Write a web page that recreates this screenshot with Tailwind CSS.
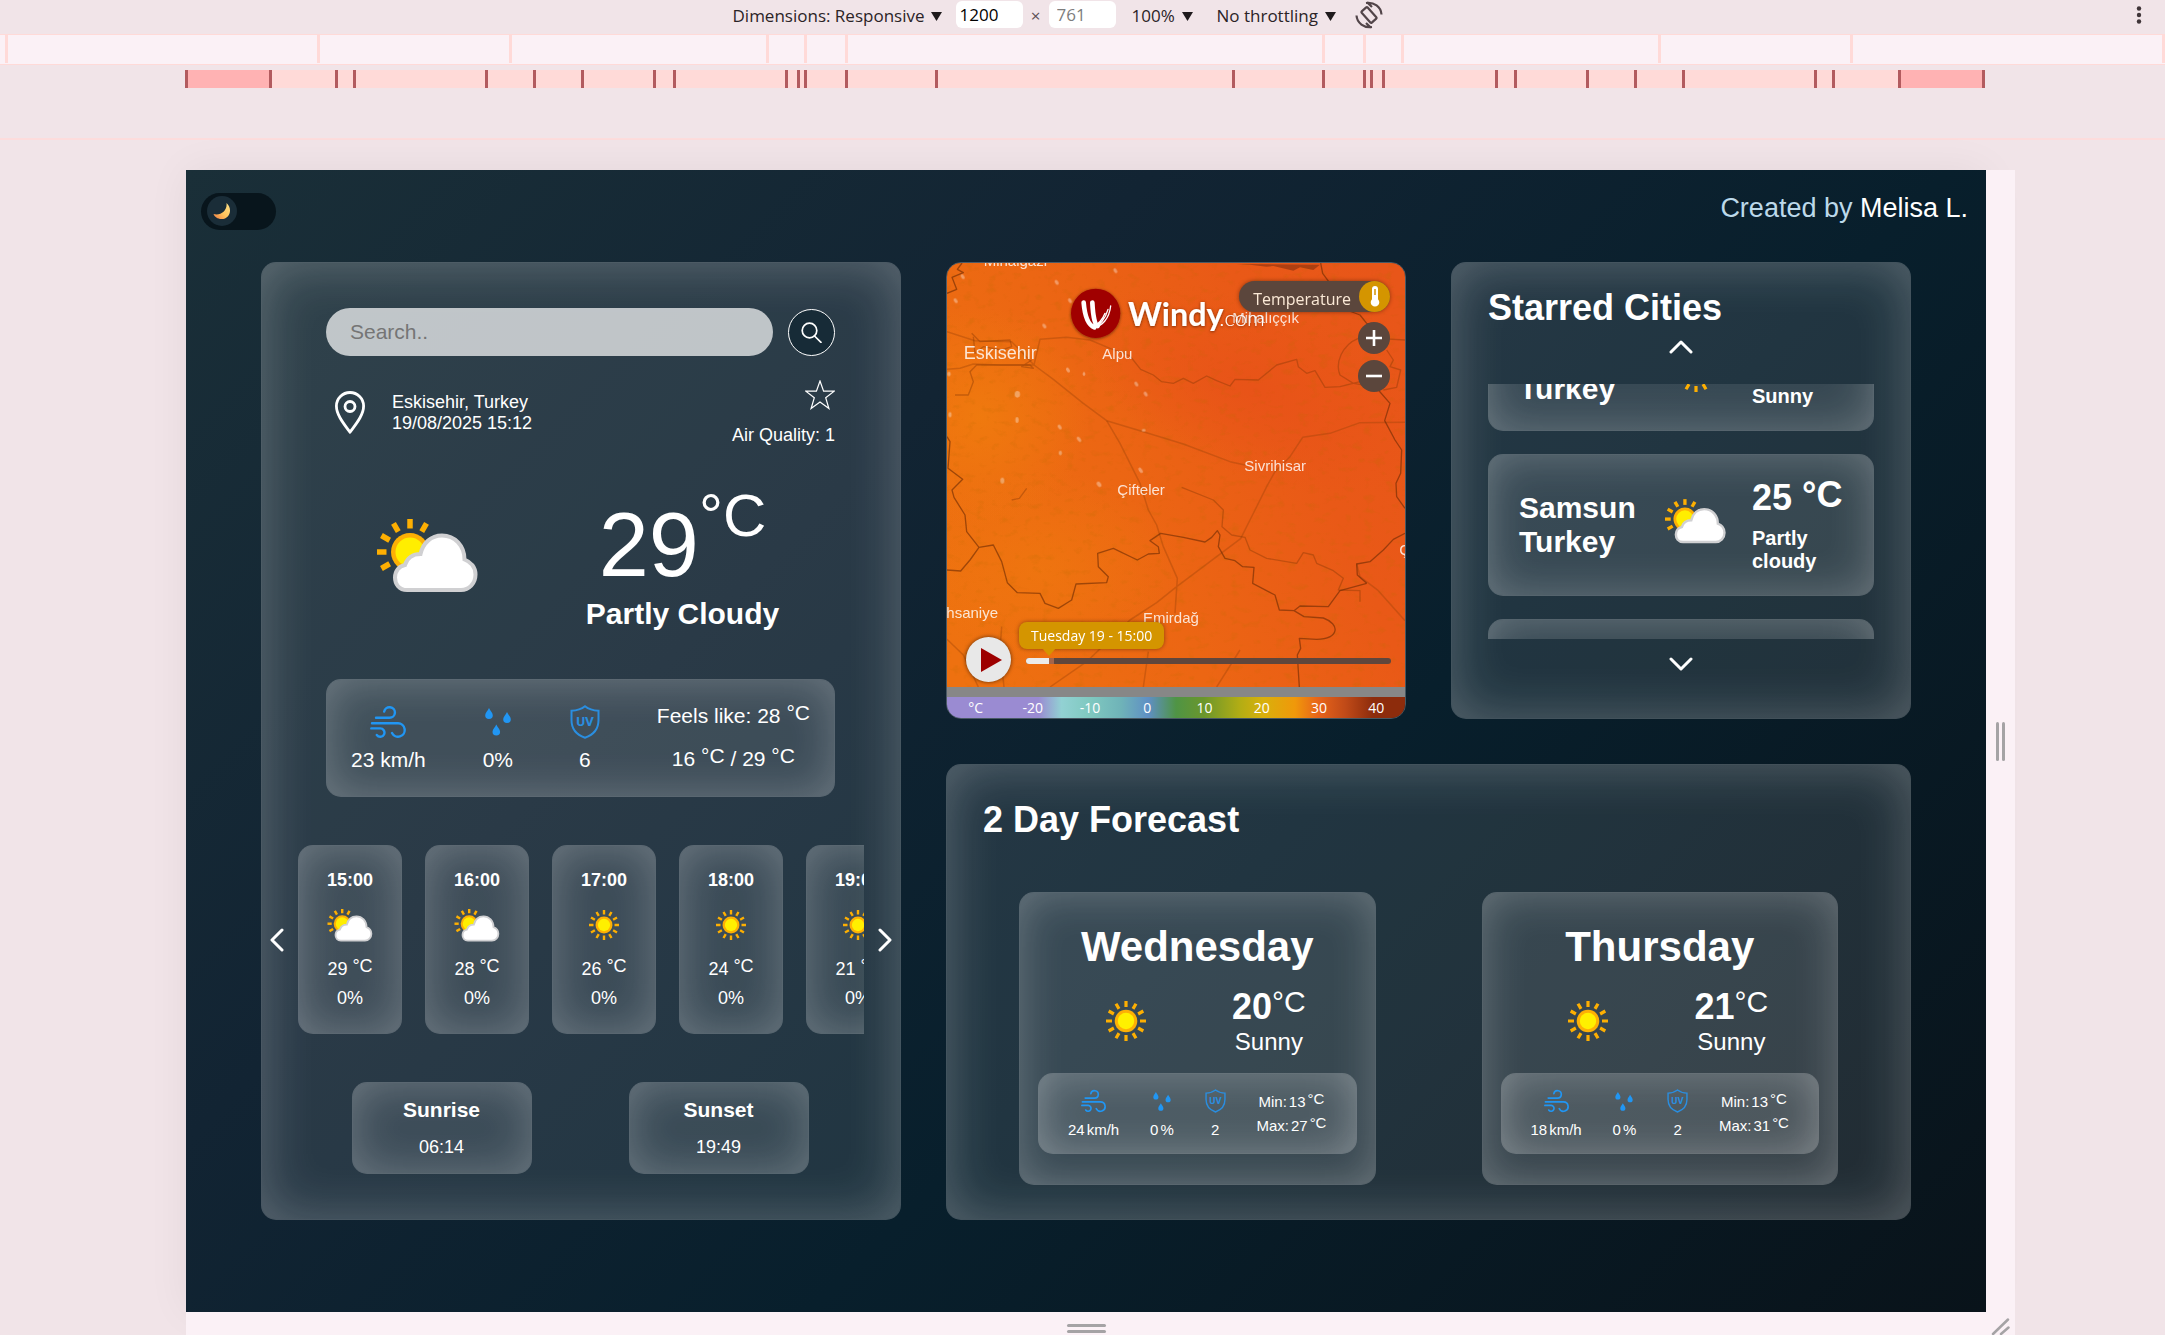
<!DOCTYPE html>
<html lang="en">
<head>
<meta charset="utf-8">
<meta name="viewport" content="width=device-width, initial-scale=1">
<title>Weather Dashboard</title>
<script src="https://cdn.jsdelivr.net/npm/@tailwindcss/browser@4"></script>
</head>
<body class="flex min-h-screen flex-col bg-[#f1e4e8] font-['Liberation_Sans',Arial,sans-serif] text-white">

<!-- Shared icons -->
<svg width="0" height="0" class="absolute" aria-hidden="true">
  <symbol id="sun" viewBox="0 0 40 40">
    <g stroke="#fdaf02" stroke-width="3.2">
      <path d="M20 0V6M20 34V40M0 20H6M34 20H40"/>
      <path d="M20 0V6M20 34V40M0 20H6M34 20H40" transform="rotate(30 20 20)"/>
      <path d="M20 0V6M20 34V40M0 20H6M34 20H40" transform="rotate(60 20 20)"/>
    </g>
    <circle cx="20" cy="20" r="11.3" fill="#fdb005"/>
    <circle cx="20" cy="20" r="8.2" fill="#fff000"/>
  </symbol>
  <symbol id="partly" viewBox="0 0 101 74">
    <g stroke="#fdaf02" stroke-width="5.5">
      <path d="M33 0V9.5"/>
      <path d="M33 0V9.5" transform="rotate(30 33 33)"/>
      <path d="M33 0V9.5" transform="rotate(-30 33 33)"/>
      <path d="M33 0V9.5" transform="rotate(-60 33 33)"/>
      <path d="M33 0V9.5" transform="rotate(-90 33 33)"/>
      <path d="M33 0V9.5" transform="rotate(-120 33 33)"/>
    </g>
    <circle cx="33" cy="33" r="19" fill="#fdb005"/>
    <circle cx="33" cy="33" r="14.5" fill="#ffee00"/>
    <path d="M30 71C22 71 18 65 18 58.500C18 52 22 47 28 46C30 39 36 35 43.500 35C46 24 54 16.500 65 16.500C78 16.500 87.500 27 87.500 40.500C94 43 98.500 48.500 98.500 55.500C98.500 64.500 92 71 84 71Z" fill="#fff" stroke="#d0d0d2" stroke-width="4"/>
  </symbol>
  <symbol id="wind" viewBox="0 0 36 32">
    <g fill="none" stroke="#2196f3" stroke-width="2.400" stroke-linecap="round">
      <path d="M6 11.800H19.500A5.400 5.300 0 1 0 14.200 5.500"/>
      <path d="M2 17.300H28A6.700 6.700 0 1 1 22 27"/>
      <path d="M1.300 22.400H10A4.200 4.200 0 1 1 6.800 29"/>
    </g>
  </symbol>
  <symbol id="drops" viewBox="0 0 26 28">
    <g fill="#2196f3">
      <path d="M4 0C5.200 2.800 7.800 4.800 7.800 7.300A3.800 3.800 0 0 1 .2 7.300C.2 4.800 2.800 2.800 4 0Z"/>
      <path d="M22 4C23.200 6.800 25.800 8.800 25.800 11.300A3.800 3.800 0 0 1 18.200 11.300C18.200 8.800 20.800 6.800 22 4Z"/>
      <path d="M11.300 16.500C12.500 19.300 15.100 21.300 15.100 23.800A3.800 3.800 0 0 1 7.500 23.800C7.500 21.300 10.100 19.300 11.300 16.500Z"/>
    </g>
  </symbol>
  <symbol id="uv" viewBox="0 0 30 34">
    <path d="M15 1.300C11 4.500 6 5.600 1.500 5.800V15C1.500 24 7 30 15 32.700C23 30 28.500 24 28.500 15V5.800C24 5.600 19 4.500 15 1.300Z" fill="none" stroke="#2a8ee0" stroke-width="2"/>
    <text x="15" y="21" text-anchor="middle" font-family="Roboto, sans-serif" font-weight="700" font-size="13.500" fill="#2a8ee0">UV</text>
  </symbol>
  <symbol id="caret" viewBox="0 0 11 9"><path d="M0 0H11L5.500 9Z" fill="#1f1a1c"/></symbol>
  <symbol id="chev-up" viewBox="0 0 24 14"><path d="M2 12L12 2L22 12" fill="none" stroke="#fff" stroke-width="3" stroke-linecap="round" stroke-linejoin="round"/></symbol>
  <symbol id="chev-down" viewBox="0 0 24 14"><path d="M2 2L12 12L22 2" fill="none" stroke="#fff" stroke-width="3" stroke-linecap="round" stroke-linejoin="round"/></symbol>
  <symbol id="chev-left" viewBox="0 0 14 24"><path d="M12 2L2 12L12 22" fill="none" stroke="#fff" stroke-width="3" stroke-linecap="round" stroke-linejoin="round"/></symbol>
  <symbol id="chev-right" viewBox="0 0 14 24"><path d="M2 2L12 12L2 22" fill="none" stroke="#fff" stroke-width="3" stroke-linecap="round" stroke-linejoin="round"/></symbol>
</svg>

<!-- Device toolbar -->
<div class="flex h-[34px] shrink-0 items-start font-['Open_Sans',sans-serif] text-[17px] leading-[24px] text-[#2b2326]">
  <div class="flex flex-1 items-start justify-center pt-px">
    <div class="flex h-[30px] items-center gap-1.5">
      <select aria-label="Device" class="appearance-none"><option>Dimensions: Responsive</option></select>
      <svg class="h-[9px] w-[11px]"><use href="#caret"/></svg>
    </div>
    <input aria-label="Width" value="1200" class="ml-[14px] h-[27px] w-[67px] rounded-md bg-white px-1 text-black">
    <span class="mt-[3px] w-[26px] text-center text-[#5b4f53]">×</span>
    <input aria-label="Height" placeholder="761" class="h-[27px] w-[67px] rounded-md bg-white px-2 placeholder:text-[#7d7d7d]">
    <div class="ml-4 flex h-[30px] items-center gap-1.5">
      <select aria-label="Zoom" class="appearance-none"><option>100%</option></select>
      <svg class="h-[9px] w-[11px]"><use href="#caret"/></svg>
    </div>
    <div class="ml-6 flex h-[30px] items-center gap-1.5">
      <select aria-label="Throttling" class="appearance-none"><option>No throttling</option></select>
      <svg class="h-[9px] w-[11px]"><use href="#caret"/></svg>
    </div>
    <button aria-label="Rotate" class="ml-[19px]">
      <svg class="h-[28px] w-[28px]" viewBox="0 0 28 28" fill="none" stroke="#524549" stroke-width="2.200">
        <rect x="10" y="6.500" width="8" height="15" rx="1" transform="rotate(-42 14 14)"/>
        <path d="M11 2C19 .8 26 6 26.500 13.500M12 1.200L17 6M17 26C9 27.200 2 22 1.500 14.500M16 26.800L11 22"/>
      </svg>
    </button>
  </div>
  <button aria-label="More options" class="w-[50px] pt-[6px]">
    <svg class="ml-[21px] h-[18px] w-[6px]" viewBox="0 0 6 18" fill="#3f3438"><circle cx="3" cy="2.500" r="2.200"/><circle cx="3" cy="9" r="2.200"/><circle cx="3" cy="15.500" r="2.200"/></svg>
  </button>
</div>

<!-- Breakpoint rulers -->
<svg class="h-[31px] w-full shrink-0" viewBox="0 0 2165 31" preserveAspectRatio="none">
  <rect width="2165" height="31" fill="#fbf1f6"/>
  <path d="M0 .5H2165M0 30.500H2165" stroke="#ffdad8"/>
  <path d="M6.500 1V29M318.500 1V29M510.500 1V29M767.500 1V29M805.500 1V29M846.500 1V29M1323.500 1V29M1364.500 1V29M1402.500 1V29M1659.500 1V29M1851.500 1V29M2163.500 1V29" stroke="#ffdad8" stroke-width="3"/>
</svg>
<svg class="mt-[5px] h-[18px] w-full shrink-0" viewBox="0 0 2165 18" preserveAspectRatio="none">
  <rect x="185" width="1800" height="18" fill="#ffdad8"/>
  <rect x="185" width="86" height="18" fill="#ffb2b3"/>
  <rect x="1899" width="86" height="18" fill="#ffb2b3"/>
  <path d="M186.500 0V18M270.500 0V18M336.500 0V18M354.500 0V18M486.500 0V18M534.500 0V18M582.500 0V18M654.500 0V18M674.500 0V18M786.500 0V18M798.500 0V18M805.500 0V18M846.500 0V18M936.500 0V18M1233.500 0V18M1323.500 0V18M1364.500 0V18M1371.500 0V18M1383.500 0V18M1496.500 0V18M1515.500 0V18M1587.500 0V18M1635.500 0V18M1683.500 0V18M1815.500 0V18M1833.500 0V18M1899.500 0V18M1983.500 0V18" stroke="#b25b5f" stroke-width="3"/>
</svg>
<div class="mt-[50px] h-0.5 shrink-0 bg-[#fddcdc]"></div>

<!-- Emulated viewport -->
<div class="mt-[30px] flex flex-1 flex-col pr-[150px] pl-[186px]">
  <div class="flex flex-1">
    <div class="min-w-0 flex-1 bg-[linear-gradient(135deg,#1a2f38_0%,#122433_33%,#081f2c_60%,#09131a_100%)] shadow-[0_0_40px_rgba(0,0,0,0.06)]">

      <header class="flex h-[92px] items-start justify-between pr-[18px] pl-[15px]">
        <button role="switch" aria-checked="true" aria-label="Dark mode" class="mt-[23px] flex h-[37px] w-[75px] items-center rounded-full bg-[#08151c] pl-[6px]">
          <span class="mb-px flex h-[30px] w-[30px] items-center justify-center rounded-full bg-[#1a2d38]">
            <svg class="h-[18px] w-[18px]" viewBox="0 0 18 18">
              <defs><linearGradient id="moon" x1="1" y1="0" x2="0" y2="1"><stop offset="0" stop-color="#ffe389"/><stop offset=".55" stop-color="#fdc35c"/><stop offset="1" stop-color="#ef7b45"/></linearGradient></defs>
              <path d="M13.500 1C20 6.500 17 17 8.500 17C4.500 17 1.500 14.800 .5 12C7.500 14 14.500 9 13.500 1Z" fill="url(#moon)"/>
            </svg>
          </span>
        </button>
        <p class="mt-[22px] text-[27px] leading-[32px] text-[#bcd9ea]">Created by <a href="#" class="text-white">Melisa L.</a></p>
      </header>

      <main class="grid grid-cols-[640fr_460fr_460fr] gap-[45px] px-[75px]">

        <!-- Current weather -->
        <section class="row-span-2 flex min-w-0 flex-col rounded-[15px] border border-white/15 bg-white/10 pt-[45px] pb-[45px] shadow-[inset_0_0_54px_rgba(255,255,255,0.25)]">
          <form class="flex items-center gap-[15px] pr-[65px] pl-[64px]">
            <input type="search" aria-label="Search" placeholder="Search.." class="h-[48px] min-w-0 flex-1 rounded-full bg-white/70 px-[24px] text-[21px] text-black placeholder:text-[#757575]">
            <button type="button" aria-label="Search" class="flex h-[47px] w-[47px] items-center justify-center rounded-full border border-white bg-[#172b37]">
              <svg class="h-[21px] w-[21px]" viewBox="0 0 21 21" fill="none" stroke="#fff" stroke-width="1.700" stroke-linecap="round"><circle cx="8.500" cy="8.500" r="7.300"/><path d="M13.500 14L20 20.300"/></svg>
            </button>
          </form>

          <div class="mt-6 flex h-[65px] items-center pr-[65px] pl-[64px]">
            <svg class="ml-[9px] h-[43px] w-[30px]" viewBox="0 0 30 43" fill="none" stroke="#fff" stroke-width="2.800" stroke-linejoin="round"><path d="M15 1.500C22.500 1.500 28.600 7.600 28.600 15C28.600 24 21 33 15 41.300C9 33 1.400 24 1.400 15C1.400 7.600 7.500 1.500 15 1.500Z"/><circle cx="15" cy="15.500" r="5"/></svg>
            <p class="ml-[27px] text-lg leading-[21px]">Eskisehir, Turkey<br>19/08/2025 15:12</p>
            <div class="ml-auto flex flex-col items-end">
              <button aria-label="Star this city"><svg class="h-[30px] w-[30px]" viewBox="0 0 30 30" fill="none" stroke="#fff" stroke-width="1.200"><path d="M15 1L18.600 11.200H29.200L20.700 17.700L23.900 28.500L15 22L6.100 28.500L9.300 17.700L.8 11.200H11.400Z"/></svg></button>
              <p class="mt-[15px] text-lg leading-[21px]">Air Quality: 1</p>
            </div>
          </div>

          <div class="mt-[56px] flex items-start justify-center gap-[108px] pr-1.5">
            <svg class="mt-[18px] h-[74px] w-[101px]"><use href="#partly"/></svg>
            <div class="text-center">
              <p class="text-[90px] leading-[88px]">29<span class="align-[40px] text-[60px] leading-[0]">°C</span></p>
              <h2 class="mt-2 text-3xl leading-[34px] font-bold">Partly Cloudy</h2>
            </div>
          </div>

          <div class="mr-[65px] ml-[64px] mt-[48px] flex h-[118px] items-start justify-between rounded-[15px] border border-white/15 bg-white/10 px-[24px] pt-[24px] text-center text-[21px] leading-[24px] shadow-[inset_0_0_45px_rgba(255,255,255,0.25)]">
            <div class="flex flex-col items-center gap-2"><span class="flex h-[36px] items-center"><svg class="h-[32px] w-[36px]"><use href="#wind"/></svg></span><span>23 km/h</span></div>
            <div class="flex flex-col items-center gap-2"><span class="flex h-[36px] items-center"><svg class="h-[28px] w-[26px]"><use href="#drops"/></svg></span><span>0%</span></div>
            <div class="flex flex-col items-center gap-2"><span class="flex h-[36px] items-center"><svg class="h-[34px] w-[30px]"><use href="#uv"/></svg></span><span>6</span></div>
            <div class="flex flex-col gap-[19px]">
              <p>Feels like: 28 <span class="align-[3px] leading-[0]">°C</span></p>
              <p>16 <span class="align-[3px] leading-[0]">°C</span> / 29 <span class="align-[3px] leading-[0]">°C</span></p>
            </div>
          </div>

          <!-- Hourly strip -->
          <div class="mt-[48px] flex items-center">
            <button aria-label="Earlier hours" class="flex w-[36px] shrink-0 justify-center pr-1.5"><svg class="h-[24px] w-[14px]"><use href="#chev-left"/></svg></button>
            <ul class="flex min-w-0 flex-1 gap-[23px] overflow-hidden text-center text-lg leading-[21px]">
              <li class="flex h-[189px] w-[104px] shrink-0 flex-col items-center rounded-[15px] border border-white/15 bg-white/10 pt-6 shadow-[inset_0_0_45px_rgba(255,255,255,0.25)]"><b>15:00</b><span class="mt-4 flex h-[36px] items-center"><svg class="h-[33px] w-[46px]"><use href="#partly"/></svg></span><span class="mt-4">29 <span class="align-[3px] leading-[0]">°C</span></span><span class="mt-2">0%</span></li>
              <li class="flex h-[189px] w-[104px] shrink-0 flex-col items-center rounded-[15px] border border-white/15 bg-white/10 pt-6 shadow-[inset_0_0_45px_rgba(255,255,255,0.25)]"><b>16:00</b><span class="mt-4 flex h-[36px] items-center"><svg class="h-[33px] w-[46px]"><use href="#partly"/></svg></span><span class="mt-4">28 <span class="align-[3px] leading-[0]">°C</span></span><span class="mt-2">0%</span></li>
              <li class="flex h-[189px] w-[104px] shrink-0 flex-col items-center rounded-[15px] border border-white/15 bg-white/10 pt-6 shadow-[inset_0_0_45px_rgba(255,255,255,0.25)]"><b>17:00</b><span class="mt-4 flex h-[36px] items-center"><svg class="h-[30px] w-[30px]"><use href="#sun"/></svg></span><span class="mt-4">26 <span class="align-[3px] leading-[0]">°C</span></span><span class="mt-2">0%</span></li>
              <li class="flex h-[189px] w-[104px] shrink-0 flex-col items-center rounded-[15px] border border-white/15 bg-white/10 pt-6 shadow-[inset_0_0_45px_rgba(255,255,255,0.25)]"><b>18:00</b><span class="mt-4 flex h-[36px] items-center"><svg class="h-[30px] w-[30px]"><use href="#sun"/></svg></span><span class="mt-4">24 <span class="align-[3px] leading-[0]">°C</span></span><span class="mt-2">0%</span></li>
              <li class="flex h-[189px] w-[104px] shrink-0 flex-col items-center rounded-[15px] border border-white/15 bg-white/10 pt-6 shadow-[inset_0_0_45px_rgba(255,255,255,0.25)]"><b>19:00</b><span class="mt-4 flex h-[36px] items-center"><svg class="h-[30px] w-[30px]"><use href="#sun"/></svg></span><span class="mt-4">21 <span class="align-[3px] leading-[0]">°C</span></span><span class="mt-2">0%</span></li>
            </ul>
            <button aria-label="Later hours" class="flex w-[36px] shrink-0 justify-center pl-1.5"><svg class="h-[24px] w-[14px]"><use href="#chev-right"/></svg></button>
          </div>

          <div class="mt-[48px] flex justify-center gap-[97px] pr-0.5 text-center">
            <div class="w-[180px] rounded-[15px] border border-white/15 bg-white/10 pt-[15px] pb-[15px] shadow-[inset_0_0_45px_rgba(255,255,255,0.25)]">
              <h3 class="text-[21px] leading-[24px] font-bold">Sunrise</h3><p class="mt-[15px] text-lg leading-[21px]">06:14</p>
            </div>
            <div class="w-[180px] rounded-[15px] border border-white/15 bg-white/10 pt-[15px] pb-[15px] shadow-[inset_0_0_45px_rgba(255,255,255,0.25)]">
              <h3 class="text-[21px] leading-[24px] font-bold">Sunset</h3><p class="mt-[15px] text-lg leading-[21px]">19:49</p>
            </div>
          </div>
        </section>

        <!-- Temperature map -->
        <section aria-label="Temperature map" class="relative flex min-w-0 flex-col overflow-hidden rounded-[15px] border border-white/25 font-['Open_Sans',sans-serif]">
          <div class="relative min-h-0 flex-1">
            <svg class="absolute inset-0 h-full w-full" viewBox="51 39 1374 1272" preserveAspectRatio="xMidYMid slice">
              <defs>
                <linearGradient id="heat" x1="0" y1="0.700" x2="1" y2="0.300"><stop offset="0" stop-color="#ee7110"/><stop offset=".4" stop-color="#ec6613"/><stop offset=".75" stop-color="#e95917"/><stop offset="1" stop-color="#e85619"/></linearGradient>
                <radialGradient id="warm"><stop offset="0" stop-color="#f07d0d"/><stop offset="1" stop-color="#f07d0d" stop-opacity="0"/></radialGradient>
                <radialGradient id="hot"><stop offset="0" stop-color="#e85318"/><stop offset="1" stop-color="#e85318" stop-opacity="0"/></radialGradient>
                <filter id="terrain" x="0" y="0" width="1" height="1"><feTurbulence type="fractalNoise" baseFrequency="0.030 0.045" numOctaves="4" seed="7"/><feColorMatrix values="0 0 0 0 .5  0 0 0 0 .15  0 0 0 0 0  0 3.500 0 0 -2"/></filter>
                <filter id="shade" x="-20%" y="-20%" width="140%" height="140%"><feDropShadow dx="0" dy="2" stdDeviation="5" flood-color="#000" flood-opacity=".55"/></filter>
              </defs>
              <rect x="0" y="0" width="1500" height="1400" fill="url(#heat)"/>
              <ellipse cx="150" cy="500" rx="330" ry="330" fill="url(#warm)" opacity=".8"/>
              <ellipse cx="330" cy="960" rx="420" ry="300" fill="url(#warm)" opacity=".5"/>
              <ellipse cx="980" cy="420" rx="560" ry="260" fill="url(#hot)" transform="rotate(20 980 420)"/>
              <rect x="51" y="39" width="1374" height="1272" filter="url(#terrain)" opacity=".22"/>
              <g fill="none" stroke="#9a4208" stroke-opacity=".38" stroke-width="4.500" stroke-linejoin="round">
                <path d="M51 245L135 272L245 275L312 345L370 388L460 460L530 512L640 545L760 582L900 635L945 645M51 358L90 355L130 342L210 345L312 345L330 268L410 262L480 270L540 295L600 318"/>
                <path d="M530 512L570 580L605 650L630 700L655 780L680 825L700 890L742 985L735 1090M360 1311L470 1235L600 1110L680 1058L740 1010L932 866L975 780L1010 710L1035 665L1080 620L1118 562L1200 550L1290 518L1425 517M1425 1112L1345 1022L1290 980L1280 940M51 1168L100 1215L145 1311M215 1130L210 1200L222 1311M655 1205L640 1311M930 1200L860 1311"/>
              </g>
              <g fill="none" stroke="#853606" stroke-opacity=".4" stroke-width="4" stroke-linejoin="round">
                <path d="M600 318L632 358L670 375L695 395L730 400L760 385L790 400L830 378L860 392L900 408L915 388L985 390L1040 345L1100 328L1105 350L1130 370L1155 362L1185 412L1230 410L1290 395M755 712L850 750L880 780L876 830L905 855L945 862L960 900L1010 925L1100 940L1120 908L1150 915L1160 940L1210 962L1240 985L1225 1020L1290 1022L1290 1055M125 250L150 275L240 270L245 290L215 300L160 290L135 310L130 260M75 435L115 435L130 395L120 365L140 345L300 345L310 355L275 350L305 330M245 750L268 745L290 715M1285 265C1235 285 1215 340 1230 375L1270 400L1330 410M1340 265L1425 270M1360 420L1400 412L1412 360L1380 350L1390 330L1370 300"/>
              </g>
              <g fill="none" stroke="#6b2a04" stroke-opacity=".6" stroke-width="4" stroke-linejoin="round">
                <path d="M51 560L60 575L54 655L98 688L66 720L72 742L105 795L110 845L147 892L190 885L215 935L232 998L262 1028L330 1030L345 1060L385 1075L425 1050L438 1002L530 998L535 980L505 950L503 910L550 895L622 930L655 912L688 910L685 890L660 872L692 850L760 862L825 876L845 862L862 842L870 855L865 890L885 925L915 932L938 950L972 952L968 1000L1035 1035L1048 1080L1092 1082L1110 1068L1195 1070L1230 1022L1310 1000M1092 1082L1122 1100L1180 1104C1230 1122 1230 1165 1160 1168L1108 1165L1112 1195L1102 1215L1108 1311M51 960L92 963L120 930L147 892"/>
                <path d="M96 39L82 58L100 68L66 82L80 118L51 130M1172 39L1178 70L1200 100L1230 115L1250 180L1290 195L1310 220L1340 225M1345 420L1380 460L1364 512L1395 570L1415 600L1412 670L1398 700L1400 740L1425 775M1425 850L1390 868L1360 900L1320 935L1280 942L1282 975L1310 1000"/>
              </g>
              <path d="M920 42L1170 44L1150 60L1110 52L1090 62L1030 48L1010 50L960 44Z" fill="#7d2c0c" opacity=".55"/>
              <g fill="#fff" opacity=".35">
                <ellipse cx="98" cy="80" rx="5" ry="8" transform="rotate(-35 98 80)"/><ellipse cx="380" cy="97" rx="5" ry="8" transform="rotate(-35 380 97)"/><ellipse cx="556" cy="62" rx="5" ry="8" transform="rotate(-35 556 62)"/><ellipse cx="77" cy="152" rx="5" ry="8" transform="rotate(-35 77 152)"/><ellipse cx="343" cy="228" rx="5" ry="8" transform="rotate(-35 343 228)"/><ellipse cx="420" cy="152" rx="5" ry="8" transform="rotate(-35 420 152)"/><ellipse cx="414" cy="360" rx="5" ry="8" transform="rotate(-35 414 360)"/><ellipse cx="462" cy="372" rx="4" ry="6"/><ellipse cx="619" cy="402" rx="5" ry="8" transform="rotate(-35 619 402)"/><ellipse cx="647" cy="432" rx="5" ry="8" transform="rotate(-35 647 432)"/><ellipse cx="262" cy="433" rx="8" ry="10"/><ellipse cx="261" cy="510" rx="5" ry="9"/><ellipse cx="389" cy="531" rx="5" ry="8" transform="rotate(-35 389 531)"/><ellipse cx="447" cy="568" rx="5" ry="9" transform="rotate(-35 447 568)"/><ellipse cx="391" cy="609" rx="5" ry="7"/><ellipse cx="641" cy="541" rx="6" ry="4"/><ellipse cx="632" cy="661" rx="5" ry="9" transform="rotate(-35 632 661)"/><ellipse cx="217" cy="692" rx="6" ry="9"/><ellipse cx="507" cy="703" rx="6" ry="9" transform="rotate(-35 507 703)"/><ellipse cx="60" cy="494" rx="5" ry="8"/><ellipse cx="57" cy="372" rx="5" ry="7"/>
              </g>
              <g fill="#fff" fill-opacity=".82" font-family="Liberation Sans, Arial, sans-serif" font-size="45">
                <text x="161" y="48">Mihalgazi</text>
                <text x="101" y="327" font-size="54">Eskisehir</text>
                <text x="517" y="327">Alpu</text>
                <text x="907" y="220">Mihalıççık</text>
                <text x="943" y="663">Sivrihisar</text>
                <text x="562" y="735">Çifteler</text>
                <text x="49" y="1104">hsaniye</text>
                <text x="639" y="1120">Emirdağ</text>
                <text x="1408" y="914">Ç</text>
              </g>
              <g filter="url(#shade)">
                <circle cx="497" cy="190" r="74" fill="#a00001"/>
                <path d="M461 158C464 195 474 225 493 232M487 158C489 200 495 226 503 228" fill="none" stroke="#fff" stroke-width="14" stroke-linecap="round"/>
                <path d="M490 231C515 232 538 205 542 168M490 231C508 228 526 208 534 178M490 230C505 222 518 208 525 190" fill="none" stroke="#fff" stroke-width="4" stroke-linecap="round"/>
                <text x="594" y="228" font-family="Lato, sans-serif" font-weight="700" font-size="97" fill="#fff">Windy</text>
                <text x="868" y="228" font-family="Lato, sans-serif" font-weight="300" font-size="66" fill="#fff">.com</text>
              </g>
            </svg>

            <div class="absolute top-[18px] right-[15px] flex flex-col items-end">
              <div class="flex h-[31px] items-center rounded-full bg-[#5b463c] pl-[14px] text-base text-[#fbe9d6] shadow-[0_0_4px_rgba(0,0,0,0.4)]">
                <span class="mt-1 mr-2">Temperature</span>
                <span class="flex h-[31px] w-[31px] items-center justify-center rounded-full bg-[#d49500]">
                  <svg class="h-[21px] w-[10px]" viewBox="0 0 10 21"><path d="M5 0A3 3 0 0 1 8 3V13.200A4.300 4.300 0 1 1 2 13.200V3A3 3 0 0 1 5 0Z" fill="#fff"/><path d="M5 3V9" stroke="#d49500" stroke-width="1.500"/></svg>
                </span>
              </div>
              <button aria-label="Zoom in" class="mt-[10px] flex h-[32px] w-[32px] items-center justify-center rounded-full bg-[#5b463c]"><svg class="h-[16px] w-[16px]" viewBox="0 0 16 16" stroke="#fff" stroke-width="2.600"><path d="M8 0V16M0 8H16"/></svg></button>
              <button aria-label="Zoom out" class="mt-[6px] flex h-[32px] w-[32px] items-center justify-center rounded-full bg-[#5b463c]"><svg class="h-[16px] w-[16px]" viewBox="0 0 16 16" stroke="#fff" stroke-width="2.600"><path d="M0 8H16"/></svg></button>
            </div>

            <div class="absolute right-[14px] bottom-[5px] left-[19px] flex items-center gap-[15px]">
              <button aria-label="Play" class="flex h-[45px] w-[45px] shrink-0 items-center justify-center rounded-full bg-[#e8e8e8] pl-[6px] shadow-[0_0_4px_rgba(0,0,0,0.6)]"><svg class="h-[24px] w-[21px]" viewBox="0 0 21 24"><path d="M0 0L21 12L0 24Z" fill="#9d0000"/></svg></button>
              <div class="relative mt-[3px] flex h-[6px] flex-1 overflow-visible rounded-full bg-[#5f463c]">
                <span class="h-full w-[23px] rounded-l-full bg-[#ececec]"></span>
                <span class="h-full w-[5px] bg-[#a4654a]"></span>
                <span class="absolute bottom-[15px] left-[-7px] rounded-lg bg-[#d49500] px-3 text-[14px] leading-[27px] whitespace-nowrap shadow-[0_0_4px_rgba(0,0,0,0.4)]">Tuesday 19 - 15:00</span>
                <svg class="absolute bottom-[8px] left-[16px] h-[8px] w-[14px]" viewBox="0 0 14 8"><path d="M0 0H14L7 8Z" fill="#d49500"/></svg>
              </div>
            </div>
          </div>
          <div class="h-[10px] bg-[#878787]"></div>
          <div class="grid h-[21px] grid-cols-8 bg-[linear-gradient(90deg,#9a8bd2_0%,#9a8bd2_20%,#92d1d3_25%,#80c9c0_31%,#6fb3b8_38%,#5f8fc4_44%,#4f9445_50%,#6a962c_56%,#b3ad14_64%,#d8b00c_69%,#f0980a_76%,#e8641a_81%,#c04a18_87%,#8d2c0c_93%,#8d2c0c_100%)] text-center text-sm leading-[22px]">
            <span>°C</span><span>-20</span><span>-10</span><span>0</span><span>10</span><span>20</span><span>30</span><span>40</span>
          </div>
        </section>

        <!-- Starred cities -->
        <section class="min-w-0 rounded-[15px] border border-white/15 bg-white/10 px-[36px] pt-6 pb-[47px] shadow-[inset_0_0_54px_rgba(255,255,255,0.25)]">
          <h2 class="text-4xl leading-[42px] font-bold">Starred Cities</h2>
          <button aria-label="Scroll up" class="mx-auto mt-[11px] block"><svg class="h-[14px] w-[24px]"><use href="#chev-up"/></svg></button>
          <div class="mt-[30px] h-[255px] overflow-hidden">
            <ul class="-mt-[72px] flex flex-col gap-[23px] font-bold">
              <li class="flex h-[119px] items-center justify-between rounded-[15px] border border-white/15 bg-white/10 px-[30px] shadow-[inset_0_0_45px_rgba(255,255,255,0.25)]">
                <p class="w-[120px] pt-[34px] text-3xl leading-[34px]">Turkey</p>
                <span class="flex w-[61px] justify-center"><svg class="h-[40px] w-[40px]"><use href="#sun"/></svg></span>
                <p class="w-[91px] pt-[50px] text-xl leading-[23px]">Sunny</p>
              </li>
              <li class="flex h-[142px] items-center justify-between rounded-[15px] border border-white/15 bg-white/10 px-[30px] shadow-[inset_0_0_45px_rgba(255,255,255,0.25)]">
                <p class="w-[120px] text-3xl leading-[34px]">Samsun<br>Turkey</p>
                <svg class="mb-2 h-[45px] w-[61px]"><use href="#partly"/></svg>
                <div class="w-[91px]">
                  <p class="text-4xl leading-[41px] whitespace-nowrap">25 <span class="align-[3px] leading-[0]">°C</span></p>
                  <p class="mt-[9px] text-xl leading-[23px]">Partly cloudy</p>
                </div>
              </li>
              <li class="h-[142px] rounded-[15px] border border-white/15 bg-white/10 shadow-[inset_0_0_45px_rgba(255,255,255,0.25)]"></li>
            </ul>
          </div>
          <button aria-label="Scroll down" class="mx-auto mt-[18px] block"><svg class="h-[14px] w-[24px]"><use href="#chev-down"/></svg></button>
        </section>

        <!-- Forecast -->
        <section class="col-span-2 min-w-0 rounded-[15px] border border-white/15 bg-white/10 px-[36px] pt-[34px] pb-[34px] shadow-[inset_0_0_54px_rgba(255,255,255,0.25)]">
          <h2 class="text-4xl leading-[42px] font-bold">2 Day Forecast</h2>
          <div class="mt-[51px] grid grid-cols-2 gap-[106px] px-[36px]">
            <article class="rounded-[15px] border border-white/15 bg-white/10 px-[18px] pt-[30px] pb-[30px] shadow-[inset_0_0_45px_rgba(255,255,255,0.25)]">
              <h3 class="text-center text-[42px] leading-[48px] font-bold">Wednesday</h3>
              <div class="mt-[15px] grid grid-cols-2 items-center justify-items-center px-4">
                <svg class="h-[40px] w-[40px]"><use href="#sun"/></svg>
                <div class="text-center">
                  <p class="text-4xl leading-[42px]"><b>20</b><span class="align-[7px] text-3xl leading-[0]">°C</span></p>
                  <p class="text-2xl leading-[28px]">Sunny</p>
                </div>
              </div>
              <div class="mt-[17px] flex h-[81px] items-start justify-between rounded-[15px] border border-white/15 bg-white/10 px-[29px] pt-[15px] text-center text-[15px] leading-[18px] shadow-[inset_0_0_45px_rgba(255,255,255,0.25)]">
                <div class="flex flex-col items-center gap-2"><svg class="h-[24px] w-[25px]"><use href="#wind"/></svg><span class="flex gap-0.5"><span>24</span><span>km/h</span></span></div>
                <div class="flex flex-col items-center gap-2"><span class="flex h-[24px] items-center"><svg class="h-[19px] w-[18px]"><use href="#drops"/></svg></span><span class="flex gap-0.5"><span>0</span><span>%</span></span></div>
                <div class="flex flex-col items-center gap-2"><svg class="h-[24px] w-[21px]"><use href="#uv"/></svg><span>2</span></div>
                <div class="mt-1 flex flex-col items-center gap-1.5"><p class="flex gap-0.5"><span>Min:</span><span>13</span><span class="-mt-[3px]">°C</span></p><p class="flex gap-0.5"><span>Max:</span><span>27</span><span class="-mt-[3px]">°C</span></p></div>
              </div>
            </article>
            <article class="rounded-[15px] border border-white/15 bg-white/10 px-[18px] pt-[30px] pb-[30px] shadow-[inset_0_0_45px_rgba(255,255,255,0.25)]">
              <h3 class="text-center text-[42px] leading-[48px] font-bold">Thursday</h3>
              <div class="mt-[15px] grid grid-cols-2 items-center justify-items-center px-4">
                <svg class="h-[40px] w-[40px]"><use href="#sun"/></svg>
                <div class="text-center">
                  <p class="text-4xl leading-[42px]"><b>21</b><span class="align-[7px] text-3xl leading-[0]">°C</span></p>
                  <p class="text-2xl leading-[28px]">Sunny</p>
                </div>
              </div>
              <div class="mt-[17px] flex h-[81px] items-start justify-between rounded-[15px] border border-white/15 bg-white/10 px-[29px] pt-[15px] text-center text-[15px] leading-[18px] shadow-[inset_0_0_45px_rgba(255,255,255,0.25)]">
                <div class="flex flex-col items-center gap-2"><svg class="h-[24px] w-[25px]"><use href="#wind"/></svg><span class="flex gap-0.5"><span>18</span><span>km/h</span></span></div>
                <div class="flex flex-col items-center gap-2"><span class="flex h-[24px] items-center"><svg class="h-[19px] w-[18px]"><use href="#drops"/></svg></span><span class="flex gap-0.5"><span>0</span><span>%</span></span></div>
                <div class="flex flex-col items-center gap-2"><svg class="h-[24px] w-[21px]"><use href="#uv"/></svg><span>2</span></div>
                <div class="mt-1 flex flex-col items-center gap-1.5"><p class="flex gap-0.5"><span>Min:</span><span>13</span><span class="-mt-[3px]">°C</span></p><p class="flex gap-0.5"><span>Max:</span><span>31</span><span class="-mt-[3px]">°C</span></p></div>
              </div>
            </article>
          </div>
        </section>
      </main>
    </div>

    <!-- Right resize handle -->
    <div class="flex w-[29px] shrink-0 items-center justify-center gap-[3px] bg-[#fbf1f6]">
      <span class="h-[39px] w-[3px] rounded-full bg-[#a5a3a5]"></span><span class="h-[39px] w-[3px] rounded-full bg-[#a5a3a5]"></span>
    </div>
  </div>
  <!-- Bottom resize handle -->
  <div class="flex h-[23px] shrink-0 bg-[#fbf1f6]">
    <div class="flex flex-1 flex-col items-center gap-[3px] pt-3">
      <span class="h-[3px] w-[39px] rounded-full bg-[#a5a3a5]"></span><span class="h-[3px] w-[39px] rounded-full bg-[#a5a3a5]"></span>
    </div>
    <svg class="h-[23px] w-[29px]" viewBox="0 0 29 23" stroke="#a5a3a5" stroke-width="2.500" stroke-linecap="round"><path d="M7 22L22 7.500M15 22L22.500 15.500"/></svg>
  </div>
</div>
</body>
</html>
